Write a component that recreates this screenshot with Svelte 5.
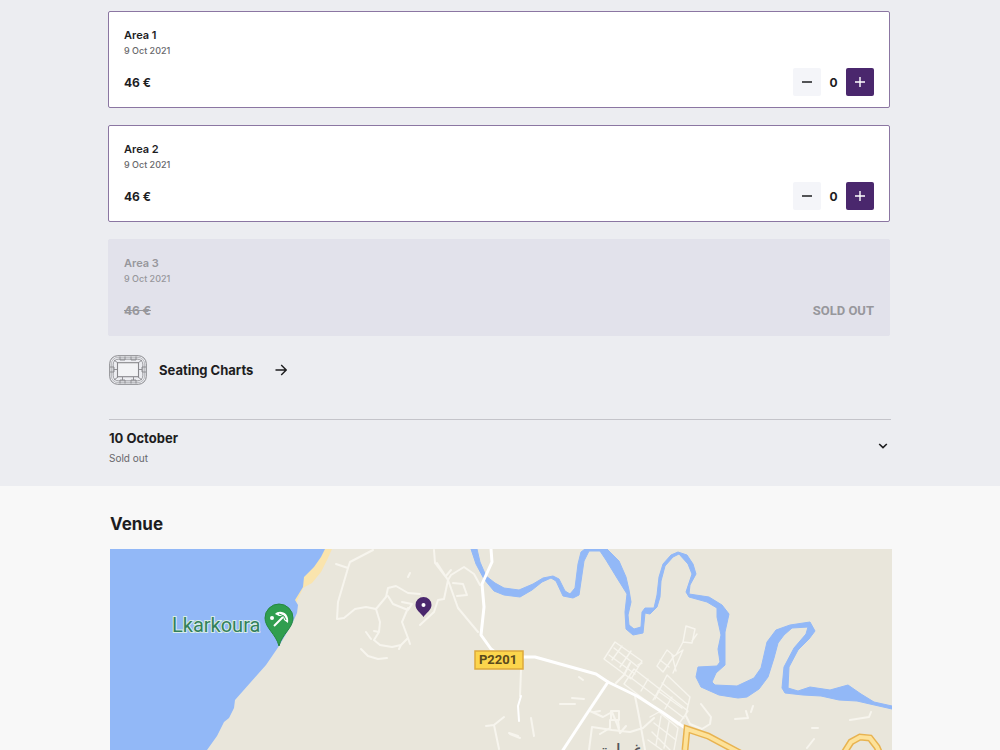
<script lang="ts">
  type Area = {
    name: string
    date: string
    price: string
    soldOut: boolean
    count: number
  }

  let areas = $state<Area[]>([
    { name: 'Area 1', date: '9 Oct 2021', price: '46 €', soldOut: false, count: 0 },
    { name: 'Area 2', date: '9 Oct 2021', price: '46 €', soldOut: false, count: 0 },
    { name: 'Area 3', date: '9 Oct 2021', price: '46 €', soldOut: true, count: 0 }
  ])

  // minor streets, drawn thin on the map
  const streets = [
    'M373 550L350 562L348 568L336 564M348 568L338 602L337 619L344 618L355 609L366 607L376 609L386 597L388 588L396 586L408 593L420 594M388 596L393 604L408 610L412 604L402 602',
    'M376 609L380 622L379 632L374 640L380 645L392 647L401 645L408 638L402 622L408 608M366 632L371 639M379 632L374 631M399 649L401 645L408 638L410 644M420 625L434 612L438 600L444 599L448 580L435 563L434 550M437 563L448 580L458 608L478 632',
    'M448 580L451 575L464 567L474 574L480 585M446 576L451 570M453 583L463 584L467 595L457 596M361 649L368 656L378 659L387 658M362 650L366 654M408 577L410 573',
    'M486 726L494 725L504 717M494 725L499 749M510 734L520 738M521 670L520 696M531 718L534 736M509 733L518 736M560 704L575 704M572 698L584 699M579 677L583 680M590 711L603 717L612 712L617 724L620 733M610 720L610 728L600 734',
    'M589 750L592 727L612 730L630 732L643 728L654 718M635 696L638 711L642 733L645 750M611 711H619V720H611ZM620 733L626 726M600 711L594 712M619 728L618 720',
    'M616 683L624 675L630 663M701 704L711 717L710 724L702 729L690 724L686 716M735 719L748 718L746 711M753 706L751 712M850 720L869 717L871 712M807 748L814 739M812 728L818 728'
  ]

  // dense blocks of the town centre
  const blocks = [
    'M604 659L615 642L642 661L631 679ZM609 655L635 674M614 648L638 667M612 660L622 646M620 667L631 651',
    'M624 684L634 669L688 711L678 725ZM630 677L684 718M641 691L648 679M653 700L660 688M665 709L672 697',
    'M655 699L667 675L690 697L686 714M658 691L682 708M662 683L688 705M657 666L667 650L674 656L663 672ZM660 660L669 667',
    'M674 656L683 650L673 673M672 655L676 671M683 642L686 626L695 629L692 643ZM692 641L697 634M683 642L676 655',
    'M650 717L659 712L678 728L674 750M654 723L676 740M652 732L670 750M648 740L662 750M661 716L656 745M669 722L664 748M638 665L642 663'
  ]
</script>

<main>
  <section class="tickets">
    <div class="container">
      <ul class="areas">
        {#each areas as area (area.name)}
          <li class="card" class:sold-out={area.soldOut}>
            <h3>{area.name}</h3>
            <p class="date">{area.date}</p>
            <div class="row">
              {#if area.soldOut}
                <s class="price">{area.price}</s>
                <strong class="status">SOLD OUT</strong>
              {:else}
                <span class="price">{area.price}</span>
                <div class="stepper">
                  <button
                    class="minus"
                    aria-label="Remove ticket for {area.name}"
                    onclick={() => (area.count = Math.max(0, area.count - 1))}
                  >
                    <svg width="12" height="12" viewBox="0 0 12 12" aria-hidden="true">
                      <path d="M1 6H11" stroke="currentColor" stroke-width="1.5" />
                    </svg>
                  </button>
                  <output>{area.count}</output>
                  <button
                    class="plus"
                    aria-label="Add ticket for {area.name}"
                    onclick={() => (area.count += 1)}
                  >
                    <svg width="12" height="12" viewBox="0 0 12 12" aria-hidden="true">
                      <path d="M1 6H11M6 1V11" stroke="currentColor" stroke-width="1.4" />
                    </svg>
                  </button>
                </div>
              {/if}
            </div>
          </li>
        {/each}
      </ul>

      <a class="seating" href="#seating">
        <svg
          width="38"
          height="30"
          viewBox="0 0 38 30"
          fill="none"
          stroke="#88888c"
          aria-hidden="true"
        >
          <rect x="0.7" y="0.7" width="36.6" height="28.6" rx="8" stroke-width="1" />
          <rect x="2.4" y="2.4" width="33.2" height="25.2" rx="6.5" stroke-width="0.5" />
          <rect x="4.2" y="4.2" width="29.6" height="21.6" rx="5" stroke-width="0.8" />
          <rect x="8.5" y="7.7" width="21" height="14" fill="#f2f3f5" stroke-width="1.1" />
          <path
            d="M11 1.500V5H16V1.500M22 1.500V5H27V1.500M11 28.500V25H16V28.500M22 28.500V25H27V28.500M1 12H5V17H1M37 12H33V17H37M13.500 22V25M24.500 22V25M5 14.500H8M30 14.500H33M5 5L9 8M33 5L29 8M5 25L9 22M33 25L29 22"
            stroke-width="0.9"
          />
        </svg>
        <span>Seating Charts</span>
        <svg class="arrow" width="12" height="12" viewBox="0 0 12 12" fill="none" aria-hidden="true">
          <path d="M0.5 6H11M6.2 1L11.2 6L6.2 11" stroke="currentColor" stroke-width="1.4" />
        </svg>
      </a>

      <button class="day" aria-expanded="false">
        <span class="day-text">
          <span class="day-title">10 October</span>
          <span class="day-status">Sold out</span>
        </span>
        <svg class="chevron" width="10" height="6" viewBox="0 0 10 6" fill="none" aria-hidden="true">
          <path d="M1.2 1L5 4.6L8.8 1" stroke="currentColor" stroke-width="1.6" />
        </svg>
      </button>
    </div>
  </section>

  <section class="venue">
    <div class="container">
      <h2>Venue</h2>
      <svg
        class="map"
        viewBox="110 549 782 201"
        preserveAspectRatio="xMidYMin slice"
        role="img"
        aria-label="Map of the venue"
      >
        <rect x="110" y="549" width="782" height="201" fill="#e9e6db" />
        <path d="M323 549H332L328 558L321 572L312 583L303 588L296 603L292 603L303 576Z" fill="#fae4ad" />
        <path
          d="M110 549H325L321 557L314 567L304 577L303 587L295 600L298 605L297 613L292 624L279 646L266 665L235 700L234 708L229 718L224 722L217 736L207 750H110Z"
          fill="#92b8f7"
        />

        <path
          class="river"
          d="M471 549H477L480 562L486 576L495 583L504 588L519 590L533 584L543 578L553 576L559 579L565 591L570 594L575 588L578 564L581 552L585 549H607L619 561L626 577L629 590L631 602L628 615L629 625L634 629L641 627L642 612L645 608L654 608L657 595L659 577L663 564L671 555L678 552L687 555L693 564L696 574L690 585L689 594L709 597L722 605L729 614L725 632L725 665L716 673L712 682L715 685L737 686L754 678L761 668L767 642L776 630L790 625L810 622L815 631L809 639L798 650L789 667L788 688L798 691L810 687L830 690L848 685L861 694L874 702L892 706V709L870 704L857 701L839 700L821 696L803 695L785 693L782 688L784 667L794 648L806 634L808 627L792 628L784 635L778 643L774 658L768 677L759 689L747 697L738 698L719 695L701 687L696 677L698 667L717 666L720 662L718 649L721 635L717 617L717 608L707 602L689 597L686 592L692 574L688 564L679 554L673 557L665 566L661 581L660 597L657 607L650 614L645 613L643 633L633 635L626 629L625 612L627 594L617 578L606 560L600 551L589 551L584 561L579 595L573 598L563 596L556 581L551 578L542 582L532 590L520 597L504 595L494 591L484 579L476 564Z"
        />

        <g class="street">
          {#each streets as d}
            <path {d} />
          {/each}
        </g>
        <g class="block">
          {#each blocks as d}
            <path {d} />
          {/each}
        </g>

        <g class="road">
          <path d="M491 549L492 562L482 584L484 607L481 635L491 649L500 656M523 657L535 657L596 674L608 682L637 696L662 712L688 730" />
          <path d="M608 682L586 715L563 750" />
          <path class="thin" d="M521 696L518 706L519 721" />
        </g>

        <path class="highway-edge" d="M685 750L687 729L708 736L740 753M844 753L851 742L860 737L870 738L877 747L880 754" />
        <path class="highway" d="M685 750L687 729L708 736L740 753M844 753L851 742L860 737L870 738L877 747L880 754" />

        <rect x="475" y="651" width="48" height="18" fill="#fcd54c" stroke="#dda93b" stroke-width="1.5" />
        <text class="road-label" x="498" y="664">P2201</text>
        <text class="town" x="621" y="758">غرابة</text>

        <text class="beach" x="172" y="632">Lkarkoura</text>
        <path
          d="M279 604A14 14 0 0 1 293 618C293 628 282 634 279 646C276 634 265 628 265 618A14 14 0 0 1 279 604Z"
          fill="#2f9e4f"
          stroke="#26873f"
        />
        <path d="M274 626L283 617" stroke="#fff" stroke-width="2" />
        <path d="M275 614C279 609 290 612 288 623L284 620L283 616L279 616Z" fill="#fff" />
        <path d="M279 614L284 616L286 620" fill="none" stroke="#2f9e4f" />
        <circle cx="272" cy="618" r="2" fill="#fff" />

        <path
          d="M423.500 597A8 8 0 0 1 431.500 605C431.500 610 426 613 423.500 617C421 613 415.500 610 415.500 605A8 8 0 0 1 423.500 597Z"
          fill="#4a276d"
        />
        <circle cx="423.500" cy="605" r="2" fill="#fff" />
      </svg>
    </div>
  </section>
</main>

<style>
  :global(body) {
    margin: 0;
    background: #f8f8f8;
  }

  main {
    font-family: Inter, 'Liberation Sans', sans-serif;
    color: #1d1d1f;
  }

  h2,
  h3,
  p,
  ul {
    margin: 0;
    padding: 0;
  }

  button {
    font: inherit;
    color: inherit;
    border: none;
    cursor: pointer;
  }

  .tickets {
    background: #ecedf1;
    padding: 11px 24px 18px;
  }

  .venue {
    padding: 0 23px 0 25px;
  }

  .container {
    max-width: 782px;
    margin: 0 auto;
  }

  .areas {
    display: flex;
    flex-direction: column;
    gap: 17px;
    margin: 0 1px 0 -1px;
    list-style: none;
  }

  .card {
    padding: 15px 15px 11px;
    background: #fff;
    border: 1px solid #8b76a2;
    border-radius: 2px;
  }

  .card.sold-out {
    background: #e2e2eb;
    border-color: #e2e2eb;
    color: #97979c;
  }

  h3 {
    font-size: 11px;
    line-height: 16px;
    font-weight: 600;
  }

  .date {
    font-size: 9px;
    line-height: 16px;
    font-weight: 500;
    color: #68686c;
  }

  .sold-out .date {
    color: inherit;
  }

  .row {
    display: flex;
    align-items: center;
    justify-content: space-between;
    height: 28px;
    margin-top: 9px;
  }

  .price,
  output {
    font-size: 12px;
    font-weight: 700;
  }

  .status {
    font-family: Roboto, sans-serif;
    font-size: 13px;
    font-weight: 700;
  }

  .stepper {
    display: flex;
    align-items: center;
  }

  .stepper button {
    display: grid;
    place-items: center;
    width: 28px;
    height: 28px;
    padding: 0;
    border-radius: 2px;
  }

  .stepper .minus {
    background: #f4f5f9;
  }

  .stepper .plus {
    background: #4a276d;
    color: #fff;
  }

  output {
    width: 25px;
    text-align: center;
  }

  .seating {
    display: flex;
    align-items: center;
    width: fit-content;
    gap: 12px;
    margin-top: 19px;
    font-size: 13px;
    line-height: 30px;
    font-weight: 700;
    color: inherit;
    text-decoration: none;
  }

  .arrow {
    margin-left: 10px;
  }

  .day {
    display: flex;
    align-items: center;
    justify-content: space-between;
    width: 100%;
    margin-top: 34px;
    padding: 8px 3px 0 0;
    background: none;
    border-top: 1px solid #c4c4ca;
    text-align: left;
  }

  .day-text {
    display: flex;
    flex-direction: column;
  }

  .day-title {
    font-size: 13px;
    line-height: 20px;
    font-weight: 700;
  }

  .day-status {
    font-size: 10px;
    line-height: 20px;
    color: #68686c;
  }

  .chevron {
    margin-bottom: 4px;
  }

  h2 {
    padding: 26px 0 13px;
    font-size: 17px;
    line-height: 24px;
    font-weight: 700;
  }

  .map {
    display: block;
    width: 100%;
  }

  .river {
    fill: #92b8f7;
    stroke: #92b8f7;
    stroke-width: 1px;
  }

  .street,
  .block,
  .road {
    fill: none;
    stroke-linejoin: round;
    stroke-linecap: round;
  }

  .street {
    stroke: #f7f5ee;
    stroke-width: 2px;
  }

  .block {
    stroke: #f7f5ee;
    stroke-width: 1.4px;
  }

  .road {
    stroke: #fff;
    stroke-width: 3px;
  }

  .road .thin {
    stroke-width: 2px;
  }

  .highway-edge,
  .highway {
    fill: none;
    stroke: #e8b350;
    stroke-width: 7px;
  }

  .highway {
    stroke: #fde29a;
    stroke-width: 4px;
  }

  .road-label {
    font-family: Roboto, sans-serif;
    font-size: 13px;
    font-weight: 700;
    fill: #5a4a1c;
    text-anchor: middle;
  }

  .town {
    font-family: 'DejaVu Sans', sans-serif;
    font-size: 20px;
    fill: #55565a;
    text-anchor: middle;
  }

  .beach {
    font-family: Roboto, sans-serif;
    font-size: 20px;
    fill: #33805a;
    stroke: #d8ece9;
    stroke-width: 2px;
    paint-order: stroke;
  }
</style>
